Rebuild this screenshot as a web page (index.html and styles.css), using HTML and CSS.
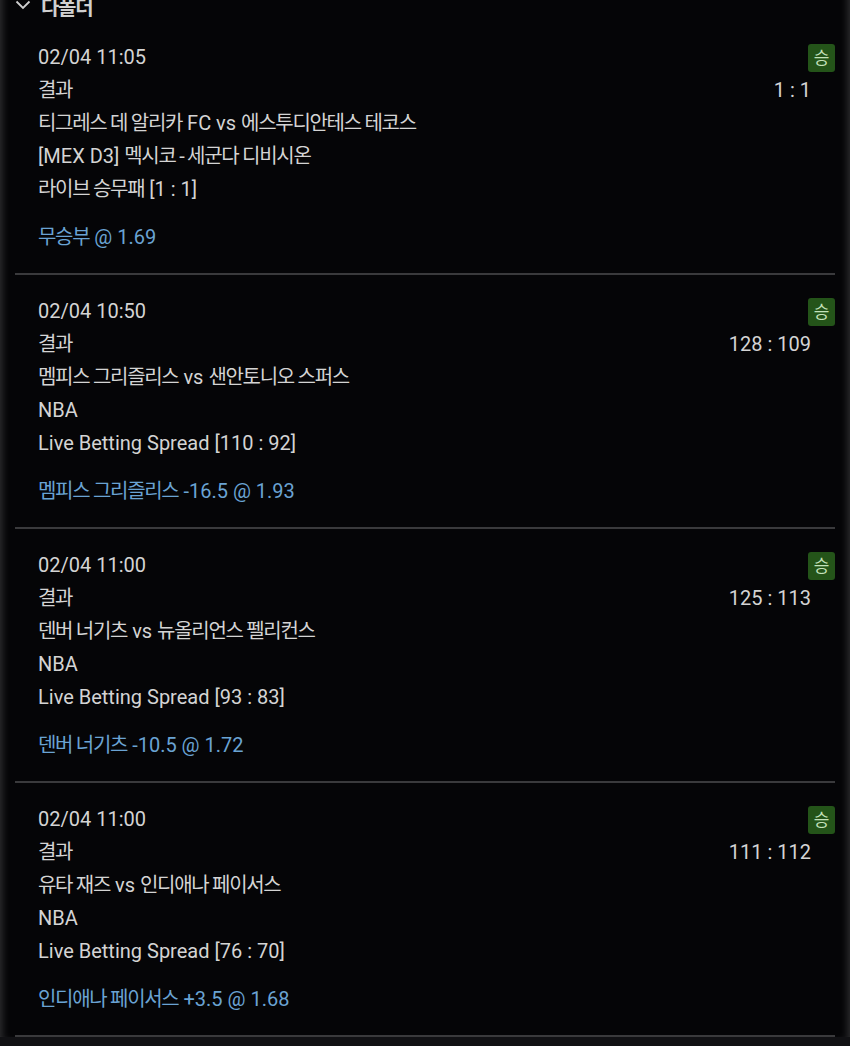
FILE: index.html
```html
<!DOCTYPE html>
<html lang="ko">
<head>
  <meta charset="UTF-8" />
  <meta name="viewport" content="width=device-width, initial-scale=1.0"/>
  <title>다폴더</title>
  <link rel="stylesheet" href="styles.css">
</head>
<body>

  <div class="panel">
    <div class="panel-head">
      <svg class="chevron" width="16" height="10" viewBox="0 0 16 10">
        <path d="M1.5 1.5 L8 8 L14.5 1.5" fill="none" stroke="#cfcfcf" stroke-width="1.8"/>
      </svg>
      <span class="ko">다폴더</span>
    </div>

    <div class="bet">
      <div class="row">
        <span>02/04 11:05</span>
        <span class="badge">승</span>
      </div>
      <div class="row">
        <span class="ko">결과</span>
        <span class="score">1 : 1</span>
      </div>
      <div class="row"><span><span class="ko">티그레스 데 알리카</span> FC vs <span class="ko">에스투디안테스 테코스</span></span></div>
      <div class="row"><span>[MEX D3] <span class="ko">멕시코 - 세군다 디비시온</span></span></div>
      <div class="row"><span><span class="ko">라이브 승무패</span> [1 : 1]</span></div>
      <div class="pick"><span class="ko">무승부</span> @ 1.69</div>
    </div>

    <div class="bet">
      <div class="row">
        <span>02/04 10:50</span>
        <span class="badge">승</span>
      </div>
      <div class="row">
        <span class="ko">결과</span>
        <span class="score">128 : 109</span>
      </div>
      <div class="row"><span><span class="ko">멤피스 그리즐리스</span> vs <span class="ko">샌안토니오 스퍼스</span></span></div>
      <div class="row">NBA</div>
      <div class="row">Live Betting Spread [110 : 92]</div>
      <div class="pick"><span class="ko">멤피스 그리즐리스</span> -16.5 @ 1.93</div>
    </div>

    <div class="bet">
      <div class="row">
        <span>02/04 11:00</span>
        <span class="badge">승</span>
      </div>
      <div class="row">
        <span class="ko">결과</span>
        <span class="score">125 : 113</span>
      </div>
      <div class="row"><span><span class="ko">덴버 너기츠</span> vs <span class="ko">뉴올리언스 펠리컨스</span></span></div>
      <div class="row">NBA</div>
      <div class="row">Live Betting Spread [93 : 83]</div>
      <div class="pick"><span class="ko">덴버 너기츠</span> -10.5 @ 1.72</div>
    </div>

    <div class="bet">
      <div class="row">
        <span>02/04 11:00</span>
        <span class="badge">승</span>
      </div>
      <div class="row">
        <span class="ko">결과</span>
        <span class="score">111 : 112</span>
      </div>
      <div class="row"><span><span class="ko">유타 재즈</span> vs <span class="ko">인디애나 페이서스</span></span></div>
      <div class="row">NBA</div>
      <div class="row">Live Betting Spread [76 : 70]</div>
      <div class="pick"><span class="ko">인디애나 페이서스</span> +3.5 @ 1.68</div>
    </div>
  </div>

  <div class="next"></div>

</body>
</html>
```

FILE: styles.css
```css
body {
  font-family: Roboto, "Noto Sans CJK KR", sans-serif;
  margin: 0;
  background: #050507;
  color: #d4d4d4;
  overflow: hidden;
}

.panel {
  background: #050507;
  box-shadow: inset 8px 0 8px -6px rgba(255, 255, 255, 0.18),
              inset -8px 0 8px -6px rgba(255, 255, 255, 0.18);
}

.panel-head {
  display: flex;
  align-items: center;
  gap: 10px;
  height: 24px;
  margin-top: -6px;
  padding-left: 15px;
  font-size: 20px;
  font-weight: bold;
  color: #d0d0d0;
}

.chevron {
  margin-top: -2px;
}

/* korean glyphs run narrower in the app font */
.ko {
  letter-spacing: -1.3px;
}

.bet {
  margin: 0 15px;
  padding: 23px 0 19px 23px;
  border-bottom: 2px solid #3a3a3c;
  font-size: 20px;
  line-height: 33px;
}

.bet + .bet {
  padding-top: 20px;
}

.row {
  display: flex;
  justify-content: space-between;
  align-items: center;
  height: 33px;
  white-space: nowrap;
}

.score {
  padding-right: 24px;
}

.badge {
  width: 27px;
  height: 28px;
  line-height: 28px;
  text-align: center;
  font-size: 17px;
  background: #245419;
  color: #c4e2bb;
  border-radius: 3px;
}

.pick {
  margin-top: 15px;
  color: #6aa3d3;
}

.next {
  height: 40px;
  background: #111114;
}
```
